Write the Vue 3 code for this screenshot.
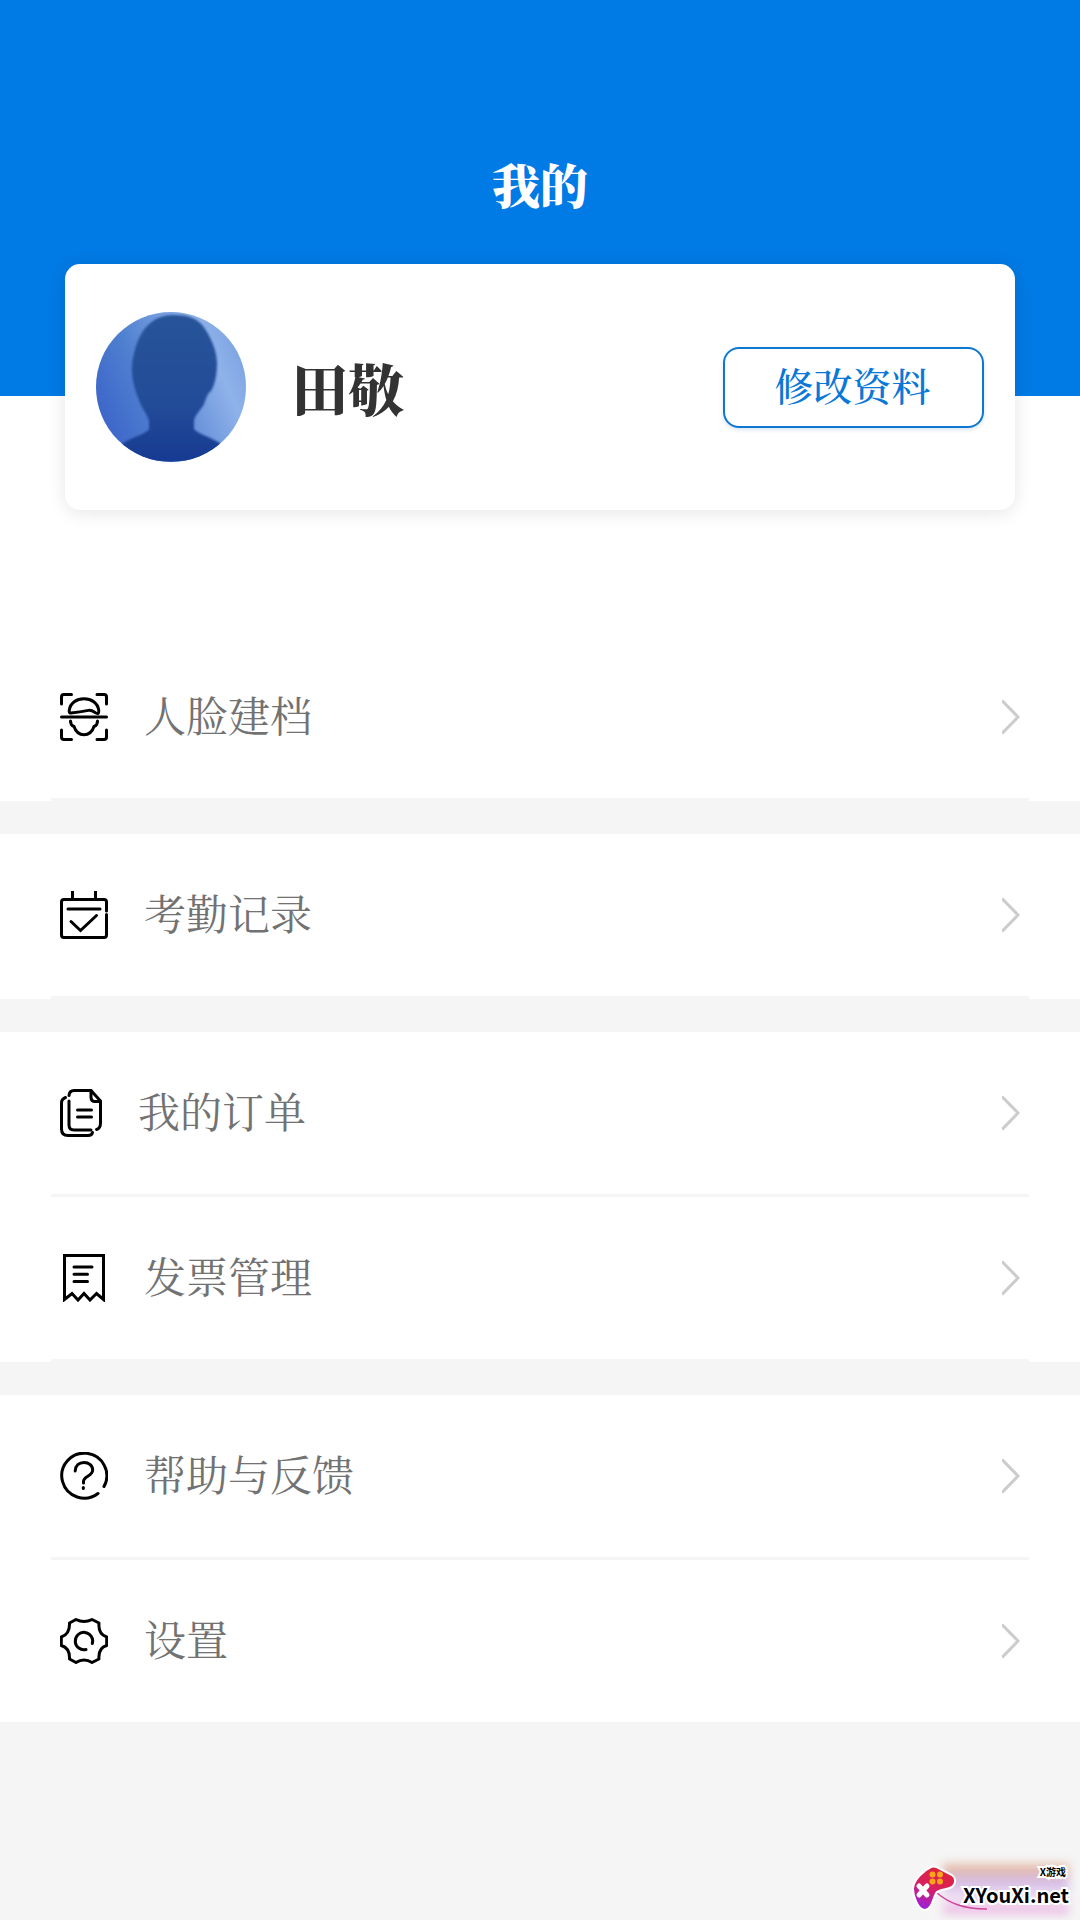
<script setup>
const groups = [
  [{ label: '人脸建档', icon: 'face' }],
  [{ label: '考勤记录', icon: 'calendar' }],
  [
    { label: '我的订单', icon: 'orders' },
    { label: '发票管理', icon: 'invoice' },
  ],
  [
    { label: '帮助与反馈', icon: 'help' },
    { label: '设置', icon: 'settings' },
  ],
]

const icons = {
  face: [
    'M1.5 11V4Q1.5 1.5 4 1.5H11.500M37 1.500H44Q46.500 1.500 46.500 4V11M46.500 37V44Q46.500 46.500 44 46.500H37M11.500 46.500H4Q1.500 46.500 1.500 44V37',
    'M1.500 24H46.500',
    'M11 20C9.300 20.200 9 19 9.300 17C10.300 10 16.500 5.700 24 5.700S37.700 10 38.700 17C39 20.500 38.500 21.300 36 20C33 18.200 31.500 16.800 28.500 17.400C22 18.800 17 19.500 11 20Z',
    'M10.500 28C10.500 31 11 32.500 14 33.500C15.500 38 19 41.800 24 41.800S32.500 38 34 33.500C37 32.500 37.500 31 37.500 28',
  ],
  calendar: [
    'M46.500 20V11Q46.500 8.500 44 8.500H4Q1.500 8.500 1.500 11V44Q1.500 46.500 4 46.500H44Q46.500 46.500 46.500 44V23.500',
    'M12.500 0V8M35.500 0V8M8 18H40',
    'M11 30.500L20.500 39.500L36.500 24.500',
  ],
  orders: [
    'M9 6.500Q9.500 1.500 14 1.500H31L40.500 12V34Q40.500 39.500 36.500 40.500',
    'M31 1.500V8Q31 12.500 35 12.500H40.500',
    'M9 12V36Q9 41 14 41H31',
    'M5.500 8.500Q1.500 10 1.500 14V40Q1.500 46.500 8 46.500H28Q32 46.500 32.500 43.500',
    'M17.500 21H31.500M17.500 28H31.500',
  ],
  invoice: [
    'M4.500 45.500V1.500H43.500V45.500L36.500 39.500L30 46L24 39.500L18 46L12 39.500Z',
    'M14 13H32M14 20.300H27.500M14 27.500H27.500',
  ],
  help: [
    'M44 34.500A22.500 22.500 0 1 0 38 41.500',
    'M15.200 19C15.500 13.500 19 10.500 24 10.500S32.700 13.500 32.700 18C32.700 24 23.500 24.500 23.500 29.500V31',
    'M23.300 35.500V36.500',
  ],
  settings: [
    'M16 2.500Q24 6.500 32 2.500L39 6Q38 17 46.700 20V28.500Q38 31 39 42L32 45.500Q24 40.500 16 45.500L9.500 42Q10 31 1.300 28.500V20Q10 17 9.500 6Z',
    'M32.300 26.500A8.700 8.700 0 1 0 26 32.500',
  ],
}
</script>

<template>
  <div class="page">
    <header class="hero">
      <h1 class="title">我的</h1>
    </header>

    <main>
      <section class="profile">
        <svg class="avatar" viewBox="0 0 150 150" role="img" aria-label="头像">
          <defs>
            <linearGradient id="sky" x1="0" y1="0.7" x2="1" y2="0.25">
              <stop offset="0" stop-color="#3b64c9" />
              <stop offset="0.35" stop-color="#5080d0" />
              <stop offset="0.8" stop-color="#8fb2ea" />
              <stop offset="1" stop-color="#7ba2e0" />
            </linearGradient>
            <linearGradient id="figure" x1="0" y1="0" x2="0" y2="1">
              <stop offset="0" stop-color="#275499" />
              <stop offset="0.6" stop-color="#234c98" />
              <stop offset="1" stop-color="#163a92" />
            </linearGradient>
            <clipPath id="round"><circle cx="75" cy="75" r="75" /></clipPath>
          </defs>
          <g clip-path="url(#round)">
            <path fill="url(#sky)" d="M0 0H150V150H0Z" />
            <path
              class="figure"
              fill="url(#figure)"
              d="M79 3C91 3 101 6 107 14C115 25 121 39 121 51C121 62 119 72 115 79C111 82 110 87 108 92C105 98 99 102 98 109V117C102 122 112 124 122 130L150 150H0L29 130C39 124 50 122 53 117V109C51 101 47 98 44 91C42 85 39 79 38 73C36 65 35 56 37 46C40 31 45 17 57 9C64 4 71 3 79 3Z"
            />
          </g>
        </svg>
        <h2 class="name">田敬</h2>
        <button type="button" class="edit">修改资料</button>
      </section>

      <nav class="menu">
        <ul v-for="(group, i) in groups" :key="i" class="group">
          <li v-for="item in group" :key="item.icon" class="item">
            <a href="#" class="row">
              <svg
                class="icon"
                :class="item.icon"
                :viewBox="item.icon === 'orders' ? '0 0 42 48' : '0 0 48 48'"
                aria-hidden="true"
              >
                <path v-for="d in icons[item.icon]" :key="d" :d="d" />
              </svg>
              <span class="label">{{ item.label }}</span>
              <svg class="chevron" viewBox="0 0 18 36" aria-hidden="true">
                <path d="M0 1.500L16 18L0 34.500" />
              </svg>
            </a>
          </li>
        </ul>
      </nav>
    </main>

    <aside class="mark">
      <svg class="pad" viewBox="0 0 46 48" aria-hidden="true">
        <defs>
          <linearGradient id="padfill" x1="0.7" y1="0" x2="0.3" y2="1">
            <stop offset="0" stop-color="#e02436" />
            <stop offset="0.5" stop-color="#d8205e" />
            <stop offset="1" stop-color="#9b1fe0" />
          </linearGradient>
        </defs>
        <path fill="none" stroke="#d0459a" stroke-width="1.500" d="M26 28C38 38 52 44 76 44" />
        <path
          fill="url(#padfill)"
          stroke="#fff"
          stroke-width="2"
          d="M20 2C23 1 26 2 29 4L41 10C45 13 45 18 42 21C38 25 30 24 26 27C22 31 22 44 14 45C7 45 2 31 2 24C2 15 13 5 20 2Z"
        />
        <path stroke="#fff" stroke-width="5" stroke-linecap="round" d="M8 21L16 30M16 21L8 30" />
        <g fill="#f8a51b">
          <circle cx="21.500" cy="9.500" r="3" />
          <circle cx="29" cy="9.500" r="3" />
          <circle cx="21.500" cy="16.500" r="3" />
          <circle cx="29" cy="16.500" r="3" />
        </g>
      </svg>
      <div class="words">
        <span class="small">X游戏</span>
        <span class="site">XYouXi.net</span>
      </div>
    </aside>
  </div>
</template>

<style>
body {
  margin: 0;
  background: #f5f5f5;
}
</style>

<style scoped>
.page {
  position: relative;
  min-height: 100vh;
  background: #f5f5f5;
  font-family: "Noto Serif CJK SC", "Noto Serif SC", "Source Han Serif SC", serif;
}

.hero {
  box-sizing: border-box;
  height: 396px;
  padding-top: 148px;
  background: #007ae4;
}

.title {
  margin: 0;
  font-size: 48px;
  line-height: 72px;
  font-weight: 900;
  text-align: center;
  color: #fff;
}

main {
  display: flow-root;
  background: #fff;
}

.profile {
  position: relative;
  display: flex;
  align-items: center;
  box-sizing: border-box;
  height: 246px;
  margin: -132px 65px 0;
  padding: 0 31px;
  border-radius: 15px;
  background: #fff;
  box-shadow: 0 3px 18px rgba(0, 0, 0, 0.1);
}

.avatar {
  flex: none;
  width: 150px;
  height: 150px;
}

.figure {
  filter: blur(1px);
}

.name {
  flex: 1;
  margin: 0 0 0 46px;
  font-size: 56px;
  line-height: 84px;
  font-weight: 900;
  color: #333;
}

.edit {
  width: 261px;
  height: 81px;
  padding: 0 2px 6px 0;
  border: 2px solid #0e78d0;
  border-radius: 16px;
  background: #fff;
  box-shadow: 0 2px 4px rgba(0, 80, 160, 0.15);
  font-family: inherit;
  font-size: 39px;
  line-height: 60px;
  font-weight: 500;
  color: #0a78d6;
}

.menu {
  display: flex;
  flex-direction: column;
  gap: 33px;
  margin-top: 126px;
  background: #f5f5f5;
}

.group {
  margin: 0;
  padding: 0 51px;
  list-style: none;
  background: #fff;
}

.item {
  border-bottom: 3px solid #f5f5f5;
}

.group:last-child .item:last-child {
  border-bottom: 0;
}

.row {
  display: flex;
  align-items: center;
  height: 162px;
  padding: 0 9px;
  text-decoration: none;
}

.icon {
  flex: none;
  width: 48px;
  height: 48px;
  fill: none;
  stroke: #000;
  stroke-width: 3;
  stroke-linecap: round;
  stroke-linejoin: round;
}

.icon.orders {
  width: 42px;
}

.icon.invoice,
.icon.calendar {
  stroke-linejoin: miter;
}

.label {
  flex: 1;
  margin-left: 36px;
  padding-bottom: 6px;
  font-size: 42px;
  line-height: 60px;
  color: #727272;
}

.chevron {
  flex: none;
  width: 18px;
  height: 36px;
  fill: none;
  stroke: #ccc;
  stroke-width: 3;
}

.mark {
  position: absolute;
  right: 11px;
  bottom: 10px;
  display: flex;
  align-items: flex-end;
  gap: 6px;
  color: #000;
  font-family: "Noto Sans CJK SC", sans-serif;
  font-weight: 700;
}

.mark::before {
  content: "";
  position: absolute;
  inset: 0 0 -4px 32px;
  background: linear-gradient(180deg, rgba(226, 160, 110, 0.7), rgba(190, 150, 220, 0.6) 35%, rgba(240, 220, 245, 0.6) 70%, rgba(225, 130, 210, 0.6));
  filter: blur(5px);
}

.pad {
  position: relative;
  width: 46px;
  height: 48px;
  margin-bottom: -3px;
  fill: none;
  overflow: visible;
}

.words {
  position: relative;
  display: flex;
  flex-direction: column;
  align-items: flex-end;
  -webkit-text-stroke: 4px #fff;
  paint-order: stroke fill;
}

.small {
  margin-right: 3px;
  font-size: 10px;
  line-height: 16px;
}

.site {
  font-size: 20px;
  line-height: 30px;
}
</style>
